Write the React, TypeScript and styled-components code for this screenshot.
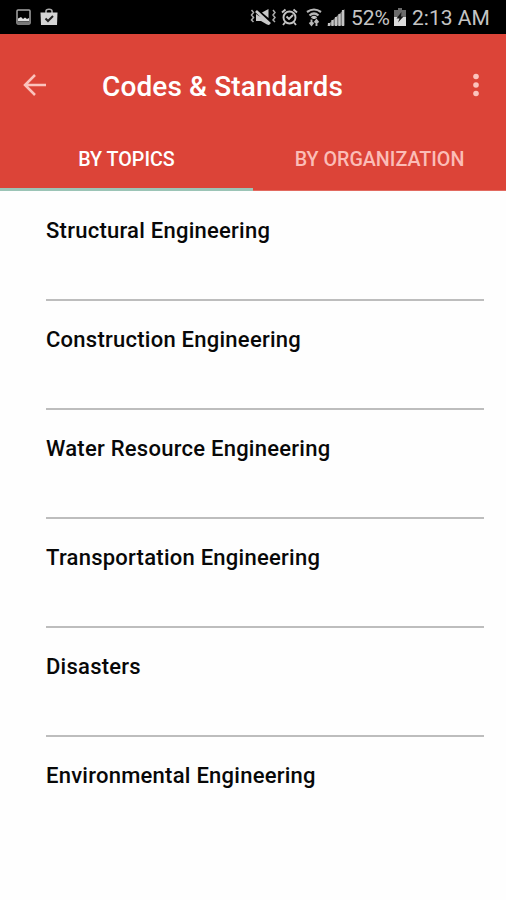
import React from 'react';
import styled, { createGlobalStyle } from 'styled-components';

const GlobalStyle = createGlobalStyle`
  * { box-sizing: border-box; }
  body { margin: 0; background: #fefefe; font-family: Roboto, sans-serif; }
`;

const Screen = styled.div`
  display: flex;
  flex-direction: column;
  width: 506px;
  height: 900px;
  overflow: hidden;
  background: #fefefe;
`;

const StatusBar = styled.header`
  display: flex;
  justify-content: space-between;
  height: 34px;
  flex: none;
  padding: 0 15px 0 16px;
  background: #000;
  color: #c4c4c4;
`;

const StatusGroup = styled.div`
  display: flex;
  align-items: center;
`;

const StatusText = styled.span<{ $width: number }>`
  width: ${(p) => p.$width}px;
  font-size: 21px;
  line-height: 34px;
  padding-top: 2px;
  white-space: nowrap;
`;

const Glyph = styled.svg<{ $gap?: number }>`
  display: block;
  flex: none;
  margin-right: ${(p) => p.$gap ?? 0}px;
`;

const Header = styled.div`
  flex: none;
  height: 157px;
  background: #dc4438;
`;

const Toolbar = styled.div`
  display: flex;
  align-items: center;
  height: 102px;
  padding: 0 20px 0 22px;
`;

const IconButton = styled.button`
  display: flex;
  padding: 0;
  border: 0;
  background: none;
  color: #fbc3bd;
`;

const Title = styled.h1`
  flex: 1;
  margin: 3px 0 0 55px;
  color: #fff;
  font-size: 28px;
  font-weight: 500;
  letter-spacing: 0.12px;
  line-height: 34px;
`;

const Tabs = styled.nav`
  display: grid;
  grid-template-columns: 253px 253px;
  height: 55px;
`;

const Tab = styled.button<{ $active?: boolean }>`
  display: flex;
  align-items: flex-start;
  justify-content: center;
  height: 55px;
  padding: 13px 0 0;
  border: 0;
  border-bottom: ${(p) => (p.$active ? '3px solid #9bc4b6' : '1px solid #e26a60')};
  background: none;
  color: ${(p) => (p.$active ? '#fff' : '#fbbdb7')};
  font: 500 19.7px/22px Roboto, sans-serif;
`;

const List = styled.ul`
  margin: 0;
  padding: 1px 22px 0 46px;
  list-style: none;
`;

const Row = styled.li`
  height: 109px;
  padding-top: 25px;
  color: #080808;
  font-size: 22px;
  font-weight: 500;
  letter-spacing: 0.25px;
  line-height: 28px;
  border-bottom: 2px solid #bdbdbd;
  &:last-child { border-bottom: 0; }
`;

const topics = [
  'Structural Engineering',
  'Construction Engineering',
  'Water Resource Engineering',
  'Transportation Engineering',
  'Disasters',
  'Environmental Engineering',
];

const PictureIcon = () => (
  <Glyph width="15" height="16" viewBox="0 0 15 16" $gap={9}>
    <rect x="1" y="1" width="13" height="14" rx="1" fill="none" stroke="#a5a5a5" strokeWidth="1.5" />
    <path d="M2 12V9.500l3-1.500 2 2 2-1.500 2 1.500 2-1v3z" fill="#dedede" />
    <path d="M1 13.500h13" stroke="#777" strokeWidth="2.500" />
  </Glyph>
);

const BagIcon = () => (
  <Glyph width="18" height="18" viewBox="0 0 18 18">
    <path d="M6 5V3q0-1.800 3-1.800T12 3v2" fill="none" stroke="#aaa" strokeWidth="1.600" />
    <path d="M.5 4.500h17L17 17H1z" fill="#d4d4d4" />
    <path d="M5.500 10.500l2.500 2.500 5-5" fill="none" stroke="#222" strokeWidth="2" />
  </Glyph>
);

const MuteIcon = () => (
  <Glyph width="27" height="18" viewBox="0 0 27 18" $gap={4}>
    <path d="M6 6l3 2 5 2 5 6v1l-2-.5-6-3.500H6z" fill="#c9c9c9" />
    <path d="M12 4.500L18.500 1v9z" fill="#c9c9c9" />
    <path d="M6 3l14 13" stroke="#c9c9c9" strokeWidth="2.800" />
    <path d="M1.500 2l2 2.500-2 2.500 2 2.500-2 2.500 2 2M23 2l2 2.500-2 2.500 2 2.500-2 2.500 2 2" fill="none" stroke="#aaa" strokeWidth="1.500" />
  </Glyph>
);

const AlarmIcon = () => (
  <Glyph width="17" height="18" viewBox="0 0 17 18" $gap={8}>
    <circle cx="8.500" cy="9.500" r="6" fill="none" stroke="#c4c4c4" strokeWidth="1.900" />
    <path d="M1 4.500L4.500 1.500M12.500 1.500L16 4.500M4 14.500l-2 2.500M13 14.500l2 2.500M5.500 8.500l2.500 2.500 4-4" fill="none" stroke="#c4c4c4" strokeWidth="1.900" />
  </Glyph>
);

const WifiIcon = () => (
  <Glyph width="16" height="19" viewBox="0 0 16 19" $gap={5}>
    <path d="M1 4q7-5 14 0M3.500 7.500q4.500-4 9 0M5.500 10q2.500-2 5 0" fill="none" stroke="#b7b7b7" strokeWidth="2.200" />
    <path d="M8 8v3" stroke="#c4c4c4" strokeWidth="2" />
    <path d="M5.500 11.500v6M3.500 14.500l2 2.500 2-2.500M10.500 18v-6M8.500 14.500l2-2.500 2 2.500" fill="none" stroke="#b8b8b8" strokeWidth="1.900" />
  </Glyph>
);

const SignalIcon = () => (
  <Glyph width="18" height="18" viewBox="0 0 18 18" $gap={6}>
    <path d="M0 17.500L17.500 1v16.500z" fill="#777" />
    <path d="M2 18v-3M5.500 18v-6M9 18V9M12.500 18V6M16 18V2" stroke="#c4c4c4" strokeWidth="2.200" />
  </Glyph>
);

const BatteryIcon = () => (
  <Glyph width="12" height="18" viewBox="0 0 12 18" $gap={6}>
    <path d="M4 0h4v2h4v16H0V2h4z" fill="#6b6b6b" />
    <path d="M0 9h12v9H0z" fill="#dcdcdc" />
    <path d="M7.500 4L2.500 10.500h3l-1.500 4 5.500-6H7z" fill="#161616" />
  </Glyph>
);

export default function App() {
  return (
    <Screen>
      <GlobalStyle />
      <StatusBar>
        <StatusGroup>
          <PictureIcon />
          <BagIcon />
        </StatusGroup>
        <StatusGroup>
          <MuteIcon />
          <AlarmIcon />
          <WifiIcon />
          <SignalIcon />
          <StatusText $width={43}>52%</StatusText>
          <BatteryIcon />
          <StatusText $width={79}>2:13 AM</StatusText>
        </StatusGroup>
      </StatusBar>
      <Header>
        <Toolbar>
          <IconButton aria-label="Back">
            <Glyph width="25" height="24" viewBox="0 0 25 24">
              <path d="M24 12H3M13 2L3 12l10 10" fill="none" stroke="currentColor" strokeWidth="2.500" />
            </Glyph>
          </IconButton>
          <Title>Codes &amp; Standards</Title>
          <IconButton aria-label="More options">
            <Glyph width="20" height="24" viewBox="0 0 20 24" fill="currentColor">
              <circle cx="10" cy="3.500" r="2.800" />
              <circle cx="10" cy="12" r="2.800" />
              <circle cx="10" cy="20.500" r="2.800" />
            </Glyph>
          </IconButton>
        </Toolbar>
        <Tabs>
          <Tab $active>BY TOPICS</Tab>
          <Tab>BY ORGANIZATION</Tab>
        </Tabs>
      </Header>
      <List>
        {topics.map((topic) => (
          <Row key={topic}>{topic}</Row>
        ))}
      </List>
    </Screen>
  );
}
